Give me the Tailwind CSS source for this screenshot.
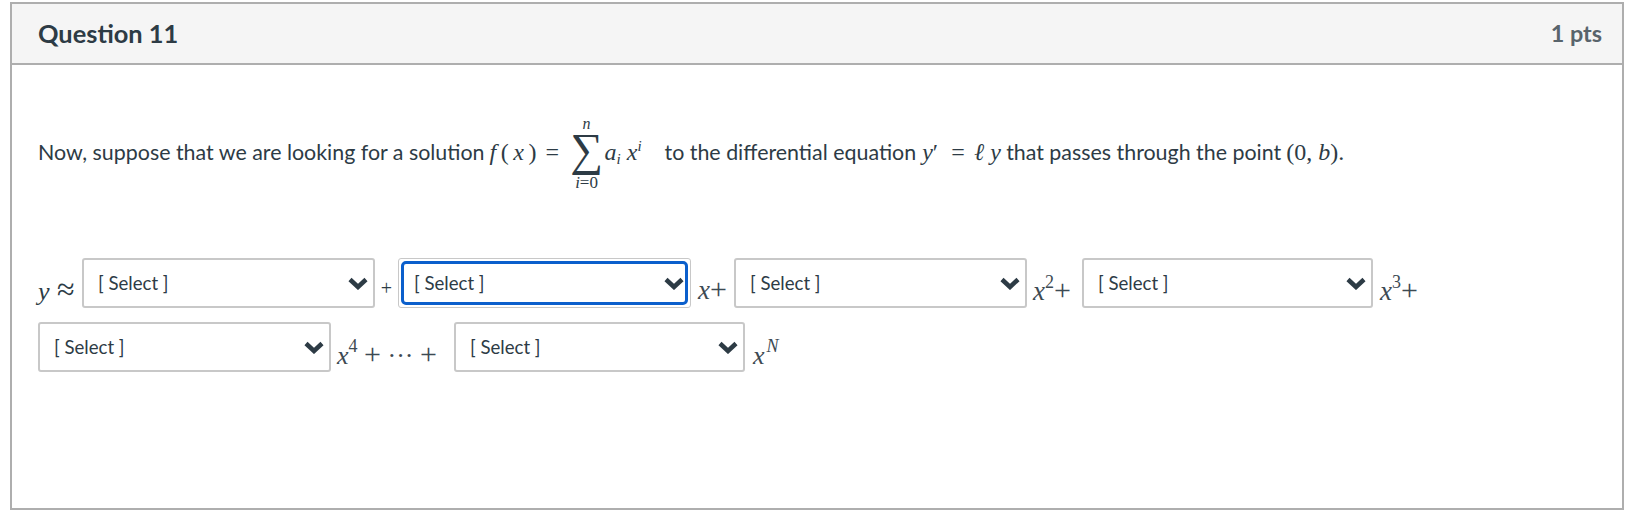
<!DOCTYPE html>
<html lang="en">
<head>
  <meta charset="UTF-8" />
  <title>Question 11</title>
  <script src="https://cdn.jsdelivr.net/npm/@tailwindcss/browser@4"></script>
</head>
<body class="bg-white text-[#2d3b45] font-['Lato',sans-serif]">
  <div class="mt-[2px] mx-[10px] h-[508px] border-2 border-[#aeaeae] flex flex-col">
    <!-- Header -->
    <header class="h-[61px] shrink-0 bg-[#f5f5f5] border-b-2 border-[#aeaeae] pl-[26px] pr-[20px] flex justify-between items-center">
      <h1 class="text-[25.4px] font-bold leading-none">Question 11</h1>
      <div class="text-[23.4px] font-bold text-[#59646c] leading-none">1 pts</div>
    </header>

    <!-- Question text -->
    <div class="pl-[26px] pt-[50px]">
      <p class="flex items-center h-[74px] text-[21.4px] whitespace-nowrap">
        <span>Now, suppose that we are looking for a solution</span>
        <span class="font-['Liberation_Serif',serif] text-[24px] tracking-[4.5px] ml-[5px] w-[47px]"><i>f</i>(<i>x</i>)</span>
        <span class="font-['Liberation_Serif',serif] text-[24px] ml-[9px] w-[15px]">=</span>
        <span class="flex flex-col items-center w-[30px] ml-[11px] translate-y-[2px] font-['Liberation_Serif',serif]">
          <i class="text-[16px] leading-[14px]">n</i>
          <span class="text-[46px] leading-[44px] -translate-y-[3px]">∑</span>
          <span class="text-[17px] leading-[16px]"><i>i</i>=0</span>
        </span>
        <span class="font-['Liberation_Serif',serif] text-[24px] ml-[3px] w-[41px]"><i>a</i><i class="text-[15px] align-[-4px]">i</i> <i>x</i><i class="text-[15px] align-[9px]">i</i></span>
        <span class="ml-[19px]">to the differential equation</span>
        <span class="font-['Liberation_Serif',serif] text-[24px] ml-[6px] w-[22px]"><i>y</i>′</span>
        <span class="font-['Liberation_Serif',serif] text-[24px] ml-[7px] w-[16px]">=</span>
        <span class="font-['Liberation_Serif',serif] text-[24px] ml-[7px] w-[27px]"><i>ℓ</i> <i>y</i></span>
        <span class="ml-[5px]">that passes through the point</span>
        <span class="font-['Liberation_Serif',serif] text-[24px] ml-[5px]">(0, <i>b</i>).</span>
      </p>
    </div>

    <!-- Answer rows -->
    <div class="pl-[26px] mt-[69px] flex flex-col gap-[14px]">
      <div class="flex items-center h-[50px] font-['Liberation_Serif',serif] text-[26px]">
        <span class="w-[44px] pt-[11px] whitespace-nowrap leading-none"><i>y</i> <span class="text-[32px] ml-[1px]">≈</span></span>
        <div class="relative w-[293px] h-[50px] border-2 border-[#c8c8c8] rounded-[3px] bg-white">
          <span class="absolute left-[14px] top-[10px] font-['Lato',sans-serif] text-[18.6px]">[ Select ]</span>
          <svg class="absolute right-[5px] top-[16px] w-[20px] h-[14px]" viewBox="0 0 20 14"><path d="M2 3.5 L10 11 L18 3.5" fill="none" stroke="#2d3b45" stroke-width="4.5"/></svg>
        </div>
        <span class="w-[23px] pt-[10px] text-center text-[20px] leading-none">+</span>
        <div class="relative w-[293px] h-[50px] border border-[#c8c8c8] rounded-[3px] bg-white p-[2px]">
          <div class="w-full h-full border-[3px] border-[#0b5fcc] rounded-[5px]"></div>
          <span class="absolute left-[15px] top-[11px] font-['Lato',sans-serif] text-[18.6px]">[ Select ]</span>
          <svg class="absolute right-[6px] top-[17px] w-[20px] h-[14px]" viewBox="0 0 20 14"><path d="M2 3.5 L10 11 L18 3.5" fill="none" stroke="#2d3b45" stroke-width="4.5"/></svg>
        </div>
        <span class="w-[43px] pl-[7px] pt-[11px] text-[#3d4a53] text-[27px] leading-none whitespace-nowrap"><i>x</i><span class="text-[30px]">+</span></span>
        <div class="relative w-[293px] h-[50px] border-2 border-[#c8c8c8] rounded-[3px] bg-white">
          <span class="absolute left-[14px] top-[10px] font-['Lato',sans-serif] text-[18.6px]">[ Select ]</span>
          <svg class="absolute right-[5px] top-[16px] w-[20px] h-[14px]" viewBox="0 0 20 14"><path d="M2 3.5 L10 11 L18 3.5" fill="none" stroke="#2d3b45" stroke-width="4.5"/></svg>
        </div>
        <span class="w-[55px] pl-[6px] pt-[11px] text-[#3d4a53] text-[27px] leading-none whitespace-nowrap"><i>x</i><span class="text-[18px] align-[12px]">2</span><span class="text-[30px]">+</span></span>
        <div class="relative w-[291px] h-[50px] border-2 border-[#c8c8c8] rounded-[3px] bg-white">
          <span class="absolute left-[14px] top-[10px] font-['Lato',sans-serif] text-[18.6px]">[ Select ]</span>
          <svg class="absolute right-[5px] top-[16px] w-[20px] h-[14px]" viewBox="0 0 20 14"><path d="M2 3.5 L10 11 L18 3.5" fill="none" stroke="#2d3b45" stroke-width="4.5"/></svg>
        </div>
        <span class="pl-[7px] pt-[11px] text-[#3d4a53] text-[27px] leading-none whitespace-nowrap"><i>x</i><span class="text-[18px] align-[12px]">3</span><span class="text-[30px]">+</span></span>
      </div>
      <div class="flex items-center h-[50px] font-['Liberation_Serif',serif] text-[26px]">
        <div class="relative w-[293px] h-[50px] border-2 border-[#c8c8c8] rounded-[3px] bg-white">
          <span class="absolute left-[14px] top-[10px] font-['Lato',sans-serif] text-[18.6px]">[ Select ]</span>
          <svg class="absolute right-[5px] top-[16px] w-[20px] h-[14px]" viewBox="0 0 20 14"><path d="M2 3.5 L10 11 L18 3.5" fill="none" stroke="#2d3b45" stroke-width="4.5"/></svg>
        </div>
        <span class="w-[123px] pl-[6px] pt-[11px] text-[#3d4a53] leading-none whitespace-nowrap"><i>x</i><span class="text-[18px] align-[12px]">4</span> <span class="text-[30px]">+</span> ··· <span class="text-[30px]">+</span></span>
        <div class="relative w-[291px] h-[50px] border-2 border-[#c8c8c8] rounded-[3px] bg-white">
          <span class="absolute left-[14px] top-[10px] font-['Lato',sans-serif] text-[18.6px]">[ Select ]</span>
          <svg class="absolute right-[5px] top-[16px] w-[20px] h-[14px]" viewBox="0 0 20 14"><path d="M2 3.5 L10 11 L18 3.5" fill="none" stroke="#2d3b45" stroke-width="4.5"/></svg>
        </div>
        <span class="pl-[8px] pt-[11px] text-[#3d4a53] text-[26px] leading-none whitespace-nowrap"><i>x</i><i class="text-[18px] align-[12px] ml-[2px]">N</i></span>
      </div>
    </div>
  </div>
</body>
</html>
